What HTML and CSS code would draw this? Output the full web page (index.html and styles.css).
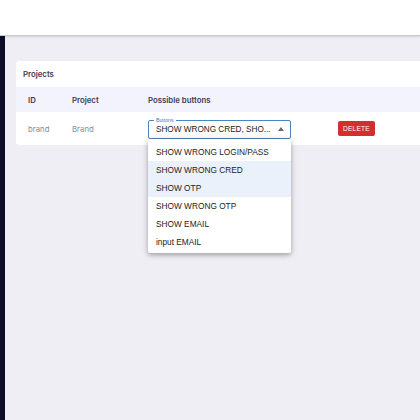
FILE: index.html
```html
<!DOCTYPE html>
<html lang="en">
<head>
    <meta charset="UTF-8">
    <meta name="viewport" content="width=device-width, initial-scale=1.0">
    <title>Projects</title>
    <link rel="stylesheet" href="styles.css">
</head>
<body>

    <!-- Barra superior -->
    <header class="topbar"></header>

    <div class="layout">
        <!-- Barra lateral -->
        <aside class="sidebar"></aside>

        <main class="content">
            <section class="card">
                <div class="card-title">Projects</div>

                <div class="row head">
                    <div>ID</div>
                    <div>Project</div>
                    <div>Possible buttons</div>
                    <div></div>
                </div>

                <div class="row">
                    <div class="muted">brand</div>
                    <div class="muted">Brand</div>
                    <div class="select-cell">
                        <div class="select">
                            <span class="select-label">Buttons</span>
                            <span class="select-value">SHOW WRONG CRED, SHO...</span>
                            <svg class="arrow" width="6" height="4" viewBox="0 0 6 4"><path d="M0 4 L3 0 L6 4 Z" fill="#6b6b6b"/></svg>
                        </div>

                        <!-- Lista aberta do select -->
                        <ul class="menu">
                            <li>SHOW WRONG LOGIN/PASS</li>
                            <li class="selected">SHOW WRONG CRED</li>
                            <li class="selected">SHOW OTP</li>
                            <li>SHOW WRONG OTP</li>
                            <li>SHOW EMAIL</li>
                            <li>input EMAIL</li>
                        </ul>
                    </div>
                    <div><button class="delete">DELETE</button></div>
                </div>
            </section>
        </main>
    </div>

</body>
</html>
```

FILE: styles.css
```css
* {
    box-sizing: border-box;
    margin: 0;
    padding: 0;
}

body {
    width: 420px;
    height: 420px;
    overflow: hidden;
    background-color: #eeeef4;
    font-family: Inter, "Liberation Sans", sans-serif;
}

/* Barra superior branca */
.topbar {
    height: 36px;
    background-color: #ffffff;
    border-bottom: 1px solid #c9c9cf;
    box-shadow: 0 1px 2px rgba(0, 0, 0, 0.12);
    position: relative;
    z-index: 2;
}

.layout {
    display: flex;
    height: 384px;
}

.sidebar {
    width: 5px;
    flex-shrink: 0;
    background-color: #0e0d27;
}

.content {
    flex: 1;
    padding: 25px 0 0 11px;
    overflow: hidden;
}

/* Cartão da tabela */
.card {
    width: 460px;
    background-color: #ffffff;
    border-radius: 3px;
}

.card-title {
    height: 26px;
    padding-left: 7px;
    display: flex;
    align-items: center;
    font-size: 7.8px;
    font-weight: 600;
    color: #3b3b55;
}

.row {
    display: grid;
    grid-template-columns: 44px 76px 190px 1fr;
    align-items: center;
    padding-left: 12px;
    height: 33px;
    font-size: 7.8px;
}

.row.head {
    height: 25px;
    background-color: #f3f3fd;
    font-weight: 600;
    color: #3b3b55;
}

.muted {
    color: #8b8b98;
}

.select-cell {
    position: relative;
}

.select {
    position: relative;
    width: 143px;
    height: 19px;
    margin-top: 1px;
    border: 1px solid #4a84c4;
    border-radius: 2px;
    display: flex;
    align-items: center;
    padding: 0 7px;
    font-family: "Liberation Sans", sans-serif;
    font-size: 8.2px;
    color: #222222;
}

.select-label {
    position: absolute;
    top: -4px;
    left: 5px;
    padding: 0 2px;
    background-color: #ffffff;
    font-size: 5.2px;
    line-height: 6px;
    color: #3f7cc0;
}

.select-value {
    flex: 1;
    white-space: nowrap;
}

.arrow {
    margin-right: -1px;
}

/* Menu suspenso sobre o conteúdo */
.menu {
    position: absolute;
    top: 20px;
    left: 0;
    width: 143px;
    list-style: none;
    background-color: #ffffff;
    border-radius: 2px;
    padding: 4px 0 2px;
    box-shadow: 0 2px 4px rgba(0, 0, 0, 0.25), 0 1px 8px rgba(0, 0, 0, 0.12);
    font-family: "Liberation Sans", sans-serif;
    font-size: 8.3px;
    color: #222222;
    z-index: 10;
}

.menu li {
    height: 18px;
    display: flex;
    align-items: center;
    padding-left: 8px;
}

.menu li.selected {
    background-color: #ebf1fa;
}

.delete {
    margin-left: 0;
    width: 37px;
    height: 15px;
    border: none;
    border-radius: 2px;
    background-color: #d32f2f;
    color: #ffffff;
    font-family: "Liberation Sans", sans-serif;
    font-size: 6.6px;
    letter-spacing: 0.2px;
    cursor: pointer;
}
```
